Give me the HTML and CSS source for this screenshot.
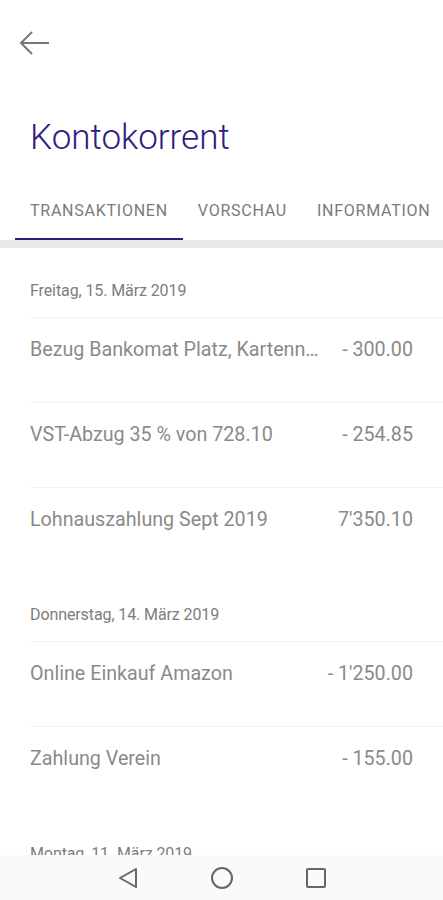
FILE: index.html
```html
<!DOCTYPE html>
<html lang="de">
<head>
    <meta charset="UTF-8">
    <meta name="viewport" content="width=device-width, initial-scale=1.0">
    <title>Kontokorrent</title>
    <link rel="stylesheet" href="styles.css">
</head>
<body>

    <div class="toolbar">
        <svg class="back" width="32" height="26" viewBox="0 0 32 26">
            <path d="M30 13H2M13 2L2 13l11 11" fill="none" stroke="#777" stroke-width="2"/>
        </svg>
    </div>

    <h1>Kontokorrent</h1>

    <div class="tabs">
        <div class="tab active">Transaktionen</div>
        <div class="tab">Vorschau</div>
        <div class="tab">Information</div>
    </div>
    <div class="band"></div>

    <div class="list">
        <div class="date">Freitag, 15. März 2019</div>
        <div class="row">
            <span class="text">Bezug Bankomat Platz, Kartennummer 1234</span>
            <span class="amount">- 300.00</span>
        </div>
        <div class="row">
            <span class="text">VST-Abzug 35 % von 728.10</span>
            <span class="amount">- 254.85</span>
        </div>
        <div class="row">
            <span class="text">Lohnauszahlung Sept 2019</span>
            <span class="amount">7'350.10</span>
        </div>

        <div class="date">Donnerstag, 14. März 2019</div>
        <div class="row">
            <span class="text">Online Einkauf Amazon</span>
            <span class="amount">- 1'250.00</span>
        </div>
        <div class="row">
            <span class="text">Zahlung Verein</span>
            <span class="amount">- 155.00</span>
        </div>

        <div class="date">Montag, 11. März 2019</div>
    </div>

    <!-- Android Navigationsleiste -->
    <div class="navbar">
        <svg width="20" height="22" viewBox="0 0 20 22">
            <path d="M18 2L2 11l16 9z" fill="none" stroke="#666" stroke-width="2" stroke-linejoin="round"/>
        </svg>
        <svg width="24" height="24" viewBox="0 0 24 24">
            <circle cx="12" cy="12" r="10" fill="none" stroke="#666" stroke-width="2"/>
        </svg>
        <svg width="20" height="20" viewBox="0 0 20 20">
            <rect x="1" y="1" width="18" height="18" rx="1" fill="none" stroke="#666" stroke-width="2"/>
        </svg>
    </div>

</body>
</html>
```

FILE: styles.css
```css
body {
    font-family: Roboto, "Noto Sans", sans-serif;
    background-color: #fff;
    margin: 0;
    height: 900px;
    overflow: hidden;
    position: relative;
}
.toolbar {
    height: 86px;
    padding-left: 19px;
    display: flex;
    align-items: center;
}
.back {
    display: block;
}
h1 {
    margin: 0;
    padding: 30px 0 0 30px;
    height: 44px;
    font-size: 35px;
    font-weight: 300;
    color: #2a1d84;
    line-height: 44px;
}
.tabs {
    display: flex;
    height: 80px;
    padding-left: 15px;
    align-items: flex-end;
}
.tab {
    padding: 0 15px 17px;
    font-size: 16px;
    letter-spacing: 0.75px;
    color: #7a7a7a;
    text-transform: uppercase;
    line-height: 20px;
    border-bottom: 2px solid transparent;
}
.tab.active {
    border-bottom-color: #2a1d84;
}
.band {
    height: 8px;
    background-color: #e9e9eb;
}
.list {
    padding-left: 30px;
}
.date {
    height: 69px;
    box-sizing: border-box;
    padding-top: 34px;
    font-size: 16px;
    line-height: 18px;
    color: #7d7d7d;
    letter-spacing: -0.1px;
}
.row {
    height: 85px;
    box-sizing: border-box;
    padding: 20px 30px 0 0;
    border-top: 1px solid #f0f0f0;
    display: flex;
    justify-content: space-between;
    gap: 20px;
    font-size: 19.7px;
    line-height: 24px;
    color: #8a8a8a;
}
.text {
    white-space: nowrap;
    overflow: hidden;
    text-overflow: ellipsis;
    max-width: 296px;
}
.amount {
    white-space: nowrap;
}
.navbar {
    position: absolute;
    left: 0;
    right: 0;
    bottom: 0;
    height: 45px;
    background-color: #fafafa;
    display: flex;
    justify-content: center;
    align-items: center;
    gap: 72px;
}
```
